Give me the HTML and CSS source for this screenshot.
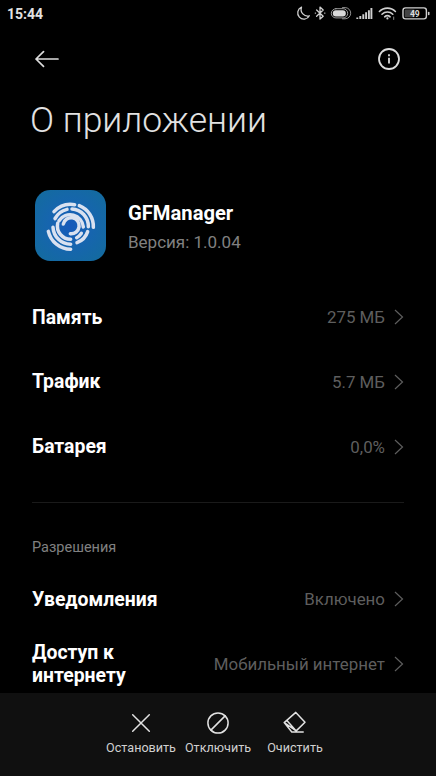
FILE: index.html
```html
<!DOCTYPE html>
<html lang="ru">
<head>
<meta charset="utf-8">
<title>О приложении</title>
<link rel="stylesheet" href="styles.css">
</head>
<body>
<div class="screen">
  <header class="status">
    <span class="clock">15:44</span>
    <svg class="indicators" width="138" height="16" viewBox="0 0 138 16" fill="none" stroke="#d0d0d0" stroke-width="1.3" stroke-linecap="round" stroke-linejoin="round">
      <path d="M5.5 2.2A6.2 6.2 0 1 0 13.4 10.8A6.6 6.6 0 0 1 5.5 2.2Z"/>
      <path d="M20.6 5l6.6 6.2-3.2 2.9V2.1L27.2 5l-6.6 6.2M19.3 8.1h.2M28.7 8.1h.2"/>
      <path d="M46.5 2.6h2.6a5.6 5.6 0 0 1 0 11.2h-2.6" stroke="#909090" stroke-width="1"/>
      <rect x="35.3" y="3.7" width="16.4" height="9.2" rx="4.6" stroke="#aaa" stroke-width=".9"/>
      <rect x="36.8" y="5.2" width="13" height="6.2" rx="3" fill="#d8d8d8" stroke="none"/>
      <path d="M61.3 14v-1.5M64.3 14v-3M67.3 14V9.2M70.1 14V7.3M72.9 14V5.3M75.4 14V3" stroke-width="1.9" stroke-linecap="butt"/>
      <path d="M83.4 6.5a11.2 11.2 0 0 1 16 0M86 9.2a7.6 7.6 0 0 1 10.8 0M88.7 11.8a4 4 0 0 1 5.4 0" stroke-width="1.6"/>
      <circle cx="91.4" cy="13.4" r="1.1" fill="#d0d0d0" stroke="none"/>
      <path d="M97.7 12v2.5" stroke="#888" stroke-width="1"/>
      <rect x="107" y="2.9" width="23.4" height="11" rx="2.6" stroke-width="1.4"/>
      <rect x="108.7" y="4.6" width="10" height="7.6" rx="1" fill="#444" stroke="none"/>
      <path d="M132.7 7.6v1.8" stroke-width="1.6"/>
      <text class="charge" x="118.8" y="11.6" text-anchor="middle">49</text>
    </svg>
  </header>
  <nav class="toolbar">
    <svg width="24" height="20" viewBox="0 0 24 20" fill="none" stroke="#ddd" stroke-width="1.7" stroke-linecap="round" stroke-linejoin="round"><path d="M23 10H1M8.5 2.7L1 10l7.5 7.3"/></svg>
    <svg width="24" height="24" viewBox="0 0 24 24" fill="none" stroke="#ddd" stroke-width="1.8"><circle cx="12" cy="12" r="10"/><path d="M12 10.8v5.7M12 7.2v2"/></svg>
  </nav>
  <h1 class="title">О приложении</h1>
  <section class="app">
    <svg class="app-icon" viewBox="30 30 213 213">
      <defs><radialGradient id="blue" cx=".5" cy=".5" r=".7"><stop offset="0" stop-color="#1659ba"/><stop offset=".45" stop-color="#1665ae"/><stop offset="1" stop-color="#136c9c"/></radialGradient></defs>
      <rect x="30" y="30" width="213" height="213" rx="46" fill="url(#blue)"/>
      <g fill="none" stroke="#d9e1f0" stroke-width="10.5" stroke-linecap="round">
        <path d="M87 95A68 68 0 0 1 149 74M163 77A67 67 0 0 1 205 142M70 154A70 70 0 0 0 137 208"/>
        <path d="M90 116A54 54 0 0 1 126 88M141 87A52 52 0 0 1 190 140M84 142A54 54 0 0 0 137 193M188 155A53 53 0 0 1 156 188"/>
        <path d="M102 122A40 40 0 0 1 175 141M98 130A40 40 0 0 0 137 178M169 160A39 39 0 0 1 155 173"/>
        <path d="M115 132A24 24 0 1 1 136 161"/>
      </g>
    </svg>
    <div class="app-text">
      <h2 class="app-name">GFManager</h2>
      <p class="version">Версия: 1.0.04</p>
    </div>
  </section>
  <main class="list">
    <div class="row"><span class="label">Память</span><span class="value">275 МБ</span><svg class="chevron" viewBox="0 0 10 16"><path d="M1 1l7.5 7L1 15"/></svg></div>
    <div class="row"><span class="label">Трафик</span><span class="value">5.7 МБ</span><svg class="chevron" viewBox="0 0 10 16"><path d="M1 1l7.5 7L1 15"/></svg></div>
    <div class="row"><span class="label">Батарея</span><span class="value">0,0%</span><svg class="chevron" viewBox="0 0 10 16"><path d="M1 1l7.5 7L1 15"/></svg></div>
    <hr class="divider">
    <h3 class="section">Разрешения</h3>
    <div class="row"><span class="label">Уведомления</span><span class="value">Включено</span><svg class="chevron" viewBox="0 0 10 16"><path d="M1 1l7.5 7L1 15"/></svg></div>
    <div class="row"><span class="label">Доступ к<br>интернету</span><span class="value">Мобильный интернет</span><svg class="chevron" viewBox="0 0 10 16"><path d="M1 1l7.5 7L1 15"/></svg></div>
  </main>
  <footer class="actions">
    <div class="action"><svg viewBox="0 0 24 24"><path d="M3.7 3.7l16.6 16.6M20.3 3.7L3.7 20.3"/></svg><span>Остановить</span></div>
    <div class="action"><svg viewBox="0 0 24 24"><circle cx="12" cy="12" r="10.1"/><path d="M4.9 19.1L19.1 4.9"/></svg><span>Отключить</span></div>
    <div class="action"><svg viewBox="0 0 24 24"><path d="M12.8 1.4l9.2 9.9-8.8 8.6L1.2 11.6zM3.9 9.4l9.3 10.5M1.2 11.6l7.6 9.4h11.4"/></svg><span>Очистить</span></div>
  </footer>
</div>
</body>
</html>
```
FILE: styles.css
```css
* { box-sizing: border-box; }
body { margin: 0; background: #000; color: #fff; font-family: Roboto, "Liberation Sans", sans-serif; }
h1, h2, h3, p { margin: 0; }
svg { display: block; flex: none; }
.screen { height: 776px; display: flex; flex-direction: column; overflow: hidden; }
.status { height: 28px; flex: none; display: flex; align-items: center; justify-content: space-between; padding: 0 2px 0 7px; }
.clock { font-size: 14px; font-weight: 700; line-height: 28px; color: #e2e2e2; }
.indicators { margin-top: -2px; }
.charge { font-size: 8.5px; font-weight: 700; fill: #ddd; stroke: none; }
.toolbar { height: 62px; flex: none; display: flex; align-items: center; justify-content: space-between; padding: 0 35px; }
.title { height: 60px; flex: none; padding-left: 30px; font-size: 35.5px; font-weight: 300; line-height: 60px; color: #e2e2e2; white-space: nowrap; }
.app { height: 71px; flex: none; margin-top: 40px; padding-left: 35px; display: flex; gap: 22px; align-items: center; }
.app-icon { width: 71px; height: 71px; }
.app-text { padding-top: 4px; }
.app-name { font-size: 20.2px; font-weight: 700; line-height: 28px; }
.version { font-size: 17px; line-height: 30px; color: #808080; }
.list { flex: 1; min-height: 0; padding: 24px 32px 0; overflow: hidden; }
.row { height: 64.7px; display: flex; align-items: center; }
.label { font-size: 19.4px; font-weight: 700; line-height: 23.5px; }
.value { margin-left: auto; font-size: 16.9px; color: #5e5e5e; white-space: nowrap; }
.chevron { width: 10px; height: 16px; margin-left: 9px; fill: none; stroke: #5e5e5e; stroke-width: 1.2; }
.divider { height: 1px; margin: 23px 0 0; border: 0; background: #1a1a1a; }
.section { margin: 33px 0 8px; font-size: 14.5px; font-weight: 400; line-height: 23px; color: #808080; }
.actions { height: 83px; flex: none; display: flex; justify-content: center; padding: 18px 0 0; background: #101010; }
.action { width: 77px; display: flex; flex-direction: column; align-items: center; gap: 4px; font-size: 12.6px; line-height: 18px; color: #d0d0d0; }
.action svg { width: 24px; height: 24px; fill: none; stroke: #e2e2e2; stroke-width: 1.5; stroke-linecap: round; stroke-linejoin: round; }
```
